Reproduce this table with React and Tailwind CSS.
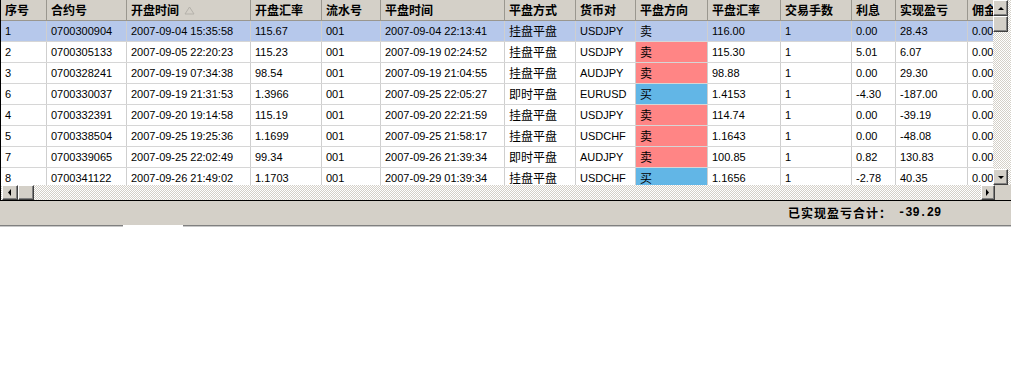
import React from 'react'

const cols = [
  ['序号', 46], ['合约号', 80], ['开盘时间', 124], ['开盘汇率', 71], ['流水号', 59],
  ['平盘时间', 124], ['平盘方式', 71], ['货币对', 60], ['平盘方向', 72], ['平盘汇率', 73],
  ['交易手数', 71], ['利息', 44], ['实现盈亏', 72], ['佣金', 60],
];

const rows = [
  ['1', '0700300904', '2007-09-04 15:35:58', '115.67', '001', '2007-09-04 22:13:41', '挂盘平盘', 'USDJPY', '卖', '116.00', '1', '0.00', '28.43', '0.00'],
  ['2', '0700305133', '2007-09-05 22:20:23', '115.23', '001', '2007-09-19 02:24:52', '挂盘平盘', 'USDJPY', '卖', '115.30', '1', '5.01', '6.07', '0.00'],
  ['3', '0700328241', '2007-09-19 07:34:38', '98.54', '001', '2007-09-19 21:04:55', '挂盘平盘', 'AUDJPY', '卖', '98.88', '1', '0.00', '29.30', '0.00'],
  ['6', '0700330037', '2007-09-19 21:31:53', '1.3966', '001', '2007-09-25 22:05:27', '即时平盘', 'EURUSD', '买', '1.4153', '1', '-4.30', '-187.00', '0.00'],
  ['4', '0700332391', '2007-09-20 19:14:58', '115.19', '001', '2007-09-20 22:21:59', '挂盘平盘', 'USDJPY', '卖', '114.74', '1', '0.00', '-39.19', '0.00'],
  ['5', '0700338504', '2007-09-25 19:25:36', '1.1699', '001', '2007-09-25 21:58:17', '挂盘平盘', 'USDCHF', '卖', '1.1643', '1', '0.00', '-48.08', '0.00'],
  ['7', '0700339065', '2007-09-25 22:02:49', '99.34', '001', '2007-09-26 21:39:34', '即时平盘', 'AUDJPY', '卖', '100.85', '1', '0.82', '130.83', '0.00'],
  ['8', '0700341122', '2007-09-26 21:49:02', '1.1703', '001', '2007-09-29 01:39:34', '挂盘平盘', 'USDCHF', '买', '1.1656', '1', '-2.78', '40.35', '0.00'],
];

const hatch = 'bg-[image:repeating-conic-gradient(#d4d0c8_0%_25%,#ffffff_0%_50%)] bg-[length:2px_2px]';

const Btn = ({ dir, className = '' }) => {
  const pts = {
    up: '2,6 5,3 8,6',
    down: '2,3 5,6 8,3',
    left: '6,1 3,4.5 6,8',
    right: '3,1 6,4.5 3,8',
  }[dir];
  return (
    <div className={`shrink-0 flex items-center justify-center bg-[#d4d0c8] border border-t-white border-l-white border-r-[#404040] border-b-[#404040] shadow-[inset_-1px_-1px_0_#808080] ${className}`}>
      {pts && (
        <svg width="10" height="9" viewBox="0 0 10 9">
          <polygon points={pts} fill="#000" />
        </svg>
      )}
    </div>
  );
};

const Cell = ({ w, children, className = '' }) => (
  <div
    className={`shrink-0 h-full border-r border-[#cfcfcf] pl-[4px] whitespace-nowrap overflow-hidden ${className}`}
    style={{ width: w }}
  >
    {children}
  </div>
);

const App = () => {
  return (
    <div className="w-[1011px] h-[384px] bg-white overflow-hidden font-['Liberation_Sans','Noto_Sans_CJK_SC',sans-serif]">
      <div className="border-l border-b border-black flex flex-col">
        <div className="flex h-[185px]">
          {/* grid */}
          <div className="w-[992px] overflow-hidden shrink-0">
            <div className="flex h-[21px] bg-[#d4d0c8] border-b border-[#9a978f]">
              {cols.map(([name, w], i) => (
                <div
                  key={i}
                  className="shrink-0 h-full flex items-center border-r border-[#9a978f] pl-[4px] whitespace-nowrap overflow-hidden text-[12px] leading-[20px] font-bold text-black font-['Noto_Sans_CJK_SC',sans-serif]"
                  style={{ width: w }}
                >
                  {name}
                  {i === 2 && (
                    <svg className="ml-[5px]" width="11" height="9" viewBox="0 0 11 9">
                      <polygon points="5.5,1 10,8 1,8" fill="none" stroke="#b4b1aa" strokeWidth="1" />
                    </svg>
                  )}
                </div>
              ))}
            </div>
            {rows.map((r, ri) => (
              <div
                key={ri}
                className={`flex h-[21px] border-b border-[#d6d6d6] text-[11px] leading-[20px] text-black ${ri === 0 ? 'bg-[#b6c8eb]' : 'bg-white'}`}
              >
                {r.map((v, ci) => {
                  let extra = '';
                  if (ci === 6 || ci === 8) extra = "text-[12px] font-['Noto_Sans_CJK_SC',sans-serif]";
                  if (ci === 8 && ri !== 0) extra += v === '卖' ? ' bg-[#ff8585]' : ' bg-[#62b6e6]';
                  return (
                    <Cell key={ci} w={cols[ci][1]} className={extra}>
                      {v}
                    </Cell>
                  );
                })}
              </div>
            ))}
          </div>
          {/* vertical scrollbar */}
          <div className={`flex-1 flex flex-col ${hatch}`}>
            <Btn dir="up" className="w-[15px] h-[16px]" />
            <div className="w-[15px] h-[16px] bg-[#d4d0c8] border border-t-white border-l-white border-r-[#404040] border-b-[#404040] shadow-[inset_-1px_-1px_0_#808080]" />
            <div className="flex-1" />
            <Btn dir="down" className="w-[15px] h-[16px]" />
          </div>
        </div>
        {/* horizontal scrollbar */}
        <div className={`flex h-[15px] ${hatch}`}>
          <Btn dir="left" className="w-[16px] h-full ml-[1px]" />
          <div className="w-[16px] h-full bg-[#d4d0c8] border border-t-white border-l-white border-r-[#404040] border-b-[#404040] shadow-[inset_-1px_-1px_0_#808080]" />
          <div className="flex-1" />
          <Btn dir="right" className="w-[14px] h-full" />
          <div className="w-[16px] h-full bg-[#d4d0c8]" />
        </div>
      </div>
      {/* summary bar */}
      <div className="h-[24px] bg-[#d4d0c8] flex items-center pl-[788px] text-[12px] font-bold text-black">
        <span className="font-['Noto_Sans_CJK_SC',sans-serif] tracking-[1px]">已实现盈亏合计：</span>
        <span className="ml-[6px] font-['Liberation_Mono',monospace]">-39.29</span>
      </div>
      <div className="flex h-[1px]">
        <div className="w-[123px] bg-[#808080]" />
        <div className="w-[60px]" />
        <div className="flex-1 bg-[#808080]" />
      </div>
      <div className="flex h-[1px]">
        <div className="w-[123px] bg-[#c8c8c8]" />
        <div className="w-[60px]" />
        <div className="flex-1 bg-[#c8c8c8]" />
      </div>
    </div>
  )
}

export default App
